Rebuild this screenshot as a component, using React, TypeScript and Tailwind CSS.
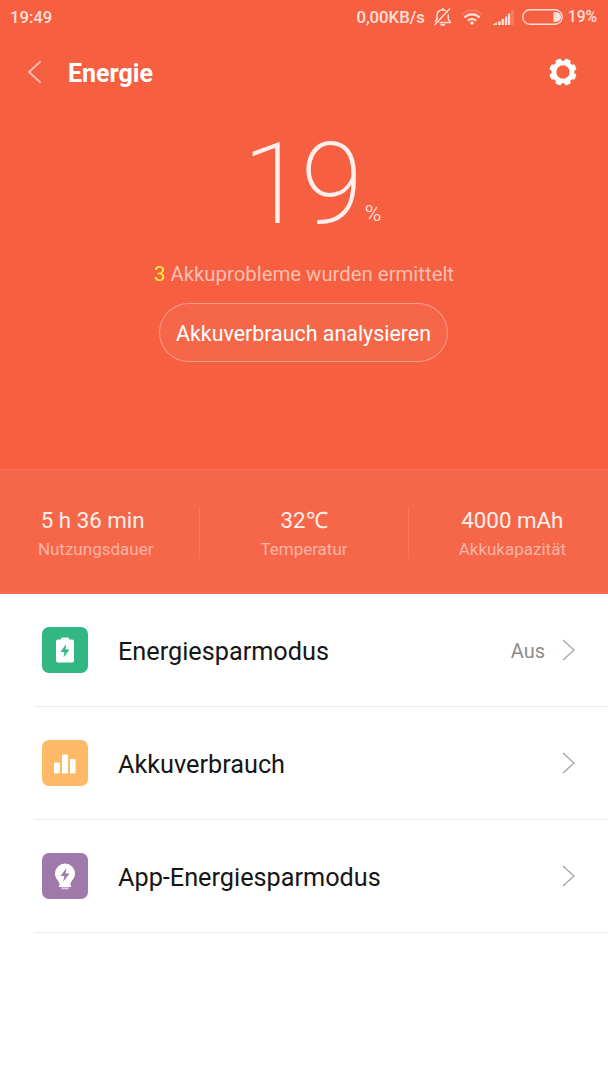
import type { ReactNode } from 'react'

interface StatProps {
  value: ReactNode
  label: string
}

interface MenuRowProps {
  icon: ReactNode
  title: string
  value?: string
}

const GEAR_ANGLES = [22.5, 67.5, 112.5, 157.5, 202.5, 247.5, 292.5, 337.5]

const StatusBar = () => (
  <div className="flex h-[34px] items-center pr-[11px] pl-[10px] text-[16.7px] font-medium text-white/80">
    <span className="pt-px">19:49</span>
    <span className="ml-auto pt-px">0,00KB/s</span>
    <svg className="ml-[8px]" width="20" height="20" viewBox="0 0 20 20" fill="none" stroke="currentColor" strokeWidth="1.5">
      <path d="M4 12.500V8.500C4 5 6.300 3 9.800 3q2 0 3.300 1M15.300 7.500V12l2 3.500H6.500" />
      <path d="M9.800 3V1M4 11.500 2.200 15M1.500 18 17 1.500" />
      <path d="M7.500 17.700h4.500" strokeWidth="1.800" />
    </svg>
    <svg className="ml-[8px]" width="22" height="16" viewBox="0 0 22 16" fill="none" stroke="currentColor">
      <path d="M1 5.500a14.500 14.500 0 0 1 20 0" strokeWidth="2" opacity=".2" />
      <path d="M3.400 8.500a11 11 0 0 1 15.200 0M6.800 11.700a6 6 0 0 1 8.400 0" strokeWidth="2.200" />
      <circle cx="11" cy="14" r="1.800" fill="currentColor" stroke="none" />
    </svg>
    <svg className="ml-[10px]" width="21" height="15" viewBox="0 0 21 15" fill="currentColor">
      <path d="M0 15v-1l4-1.500V15zM5 11.500h2.700V15H5zM8.500 9h2.700v6H8.500zM12 6.500h2.300V15H12zM15 3.500h2.200V15H15z" />
      <path d="M18 0h3v15h-3z" opacity=".2" />
    </svg>
    <svg className="mr-[5px] ml-[8px]" width="41" height="16" viewBox="0 0 41 16">
      <rect x=".75" y=".75" width="39.500" height="14.500" rx="7.250" fill="none" stroke="currentColor" strokeWidth="1.300" />
      <path d="M31.500 3H34a5 5 0 0 1 0 10h-2.500z" fill="currentColor" />
    </svg>
    <span className="pt-px text-[15.6px]">19%</span>
  </div>
)

const Gear = () => (
  <svg width="28" height="28" viewBox="-14 -14 28 28" fill="#fff">
    <circle r="9" fill="none" stroke="#fff" strokeWidth="4.600" />
    {GEAR_ANGLES.map((angle) => (
      <path key={angle} d="M-3.600-10-2.700-13.100Q-2.500-13.600-2-13.600H2Q2.500-13.600 2.700-13.100L3.600-10z" transform={`rotate(${angle})`} />
    ))}
  </svg>
)

const Header = () => (
  <header className="flex h-[76px] items-center pr-[31px] pl-[27px] text-white">
    <svg width="15" height="24" viewBox="0 0 15 24" fill="none" stroke="currentColor" strokeWidth="1.800" opacity=".6">
      <path d="M13.500 1.500 2 12l11.500 10.500" />
    </svg>
    <h1 className="ml-[26px] pt-[3px] text-[25px] font-bold">Energie</h1>
    <button className="ml-auto">
      <Gear />
    </button>
  </header>
)

const Stat = ({ value, label }: StatProps) => (
  <div className="flex flex-1 flex-col items-center pt-0.5">
    <span className="text-[22.300px] leading-[28px] text-white/90">{value}</span>
    <span className="mt-[3px] text-[17px] leading-6 text-white/50">{label}</span>
  </div>
)

const BatteryIcon = () => (
  <div className="flex size-[46px] items-center justify-center rounded-[7px] bg-[#32b683]">
    <svg width="18" height="26" viewBox="0 0 18 26">
      <path d="M5 2.500V1.500Q5 .5 6 .5h6q1 0 1 1v1h3q2 0 2 2v19q0 2-2 2H2q-2 0-2-2v-19q0-2 2-2z" fill="#fff" />
      <path d="m10 7-5.500 8h4L7.500 20.500 13.500 12.500H9.500z" fill="#32b683" />
    </svg>
  </div>
)

const ChartIcon = () => (
  <div className="flex size-[46px] items-center justify-center rounded-[7px] bg-[#ffba68]">
    <svg className="mt-[2px]" width="22" height="20" viewBox="0 0 22 20" fill="#fff">
      <rect y="8.500" width="6" height="11" rx="1" />
      <rect x="8" y=".5" width="6" height="19" rx="1" />
      <rect x="16" y="5" width="5.500" height="14.500" rx="1" />
    </svg>
  </div>
)

const BulbIcon = () => (
  <div className="flex size-[46px] items-center justify-center rounded-[7px] bg-[#9e79a9]">
    <svg width="20" height="27" viewBox="0 0 20 27">
      <path d="M10 .5a10 10 0 0 1 10 10c0 5.500-4.500 7-4.800 12H4.800C4.500 17.500 0 16 0 10.500a10 10 0 0 1 10-10z" fill="#fff" />
      <path d="M4 22h12v2H4z" fill="#fff" />
      <path d="M6.500 24.500h7v1.800h-7z" fill="#ded0e2" />
      <path d="m11.500 5-6 8h4l-1.500 6 6.500-8.500h-4z" fill="#9e79a9" />
    </svg>
  </div>
)

const MenuRow = ({ icon, title, value }: MenuRowProps) => (
  <li className="ml-[34px] flex h-[113px] items-center border-b border-[#ececec] pr-[33px] pl-2">
    {icon}
    <span className="ml-[30px] pt-[3px] text-[25.25px] text-[#161616]">{title}</span>
    {value && <span className="ml-auto pt-[2px] text-[20px] text-[#8c8c8c]">{value}</span>}
    <svg className={value ? 'ml-[17px]' : 'ml-auto'} width="13" height="22" viewBox="0 0 13 22" fill="none" stroke="#aaa" strokeWidth="1.500">
      <path d="m1 1 11 10L1 21" />
    </svg>
  </li>
)

const App = () => {
  return (
    <div className="flex h-[1080px] w-[608px] flex-col overflow-hidden bg-white font-[Roboto,sans-serif]">
      <div className="flex h-[594px] flex-col bg-[#f65f40]">
        <StatusBar />
        <Header />
        <main className="flex flex-1 flex-col items-center">
          <div className="flex h-[147px] items-baseline pt-[3px] pl-[16px] text-white">
            <span className="text-[113px] leading-[143px] font-extralight tracking-[-4px] text-white/90">19</span>
            <span className="relative -top-[2px] ml-[6px] text-[22.5px] font-light text-white/90">%</span>
          </div>
          <p className="mt-[2px] text-[20.350px] leading-[30px] text-white/60">
            <span className="text-[#ffeb3b]">3</span> Akkuprobleme wurden ermittelt
          </p>
          <button className="mt-[14px] mr-px h-[59px] w-[289px] rounded-full border border-white/35 bg-white/5 pt-[3px] text-[21.400px] text-white">
            Akkuverbrauch analysieren
          </button>
        </main>
        <section className="flex h-[125px] items-center border-t border-white/5 bg-white/5">
          <div className="-mx-2 flex flex-1 items-center">
            <Stat value={<span className="pr-1.5">5 h 36 min</span>} label="Nutzungsdauer" />
            <div className="h-[51px] w-px bg-white/10" />
            <Stat value="32℃" label="Temperatur" />
            <div className="h-[51px] w-px bg-white/10" />
            <Stat value="4000 mAh" label="Akkukapazität" />
          </div>
        </section>
      </div>
      <ul>
        <MenuRow icon={<BatteryIcon />} title="Energiesparmodus" value="Aus" />
        <MenuRow icon={<ChartIcon />} title="Akkuverbrauch" />
        <MenuRow icon={<BulbIcon />} title="App-Energiesparmodus" />
      </ul>
    </div>
  )
}

export default App
